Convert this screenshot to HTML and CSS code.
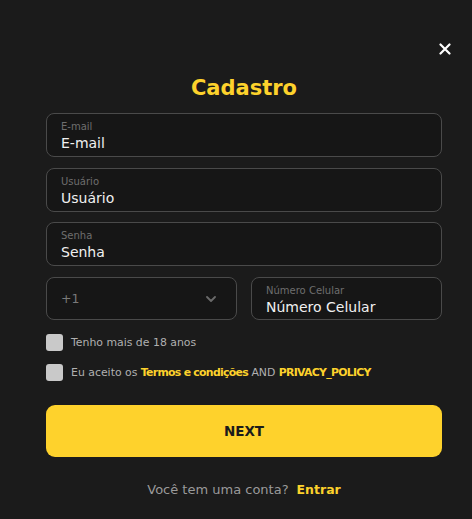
FILE: index.html
```html
<!DOCTYPE html>
<html lang="pt">
<head>
<meta charset="utf-8">
<title>Cadastro</title>
<link rel="stylesheet" href="styles.css">
</head>
<body>
<div class="modal">
  <button class="close" aria-label="Fechar">
    <svg width="12" height="12" viewBox="0 0 12 12"><path d="M1.5 1.5L10.5 10.5M10.5 1.5L1.5 10.5" stroke="#fff" stroke-width="2.2" stroke-linecap="round"/></svg>
  </button>
  <h1 class="title">Cadastro</h1>
  <div class="fields">
    <div class="field"><span class="label">E-mail</span><span class="value">E-mail</span></div>
    <div class="field"><span class="label">Usuário</span><span class="value">Usuário</span></div>
    <div class="field"><span class="label">Senha</span><span class="value">Senha</span></div>
    <div class="row">
      <div class="field select"><span class="code">+1</span>
        <svg class="chev" width="10" height="6" viewBox="0 0 10 6"><path d="M1 1L5 5L9 1" stroke="#6a6a6a" stroke-width="1.8" fill="none" stroke-linecap="round" stroke-linejoin="round"/></svg>
      </div>
      <div class="field"><span class="label">Número Celular</span><span class="value">Número Celular</span></div>
    </div>
  </div>
  <div class="checks">
    <label class="check"><span class="box"></span><span>Tenho mais de 18 anos</span></label>
    <label class="check"><span class="box"></span><span>Eu aceito os <b class="hl">Termos e condições</b> AND <b class="hl">PRIVACY_POLICY</b></span></label>
  </div>
  <button class="next">NEXT</button>
  <p class="footer"><span>Você tem uma conta?</span><b class="hl entrar">Entrar</b></p>
</div>
</body>
</html>
```
FILE: styles.css
```css
* { box-sizing: border-box; }
html, body { margin: 0; padding: 0; background: #1b1b1b; }
body { font-family: "DejaVu Sans", "Open Sans", sans-serif; color: #e6e6e6; }
.modal { position: relative; width: 472px; height: 519px; padding: 76px 30px 0 46px; }
.close { position: absolute; top: 43px; left: 439px; width: 12px; height: 12px; padding: 0; border: 0; background: none; display: block; }
.close svg { display: block; }
.title { margin: 0 0 13px; width: 396px; text-align: center; color: #fdd22c; font-size: 21px; line-height: 24px; font-weight: 700; }
.fields { display: flex; flex-direction: column; gap: 10.7px; width: 396px; }
.field { height: 44px; border: 1px solid #4a4a4a; border-radius: 8px; background: #161616; padding: 6px 14px 3px; display: flex; flex-direction: column; }
.label { font-size: 10px; line-height: 13px; color: #6e6e6e; }
.value { font-size: 14px; line-height: 20px; color: #f0f0f0; }
.row { display: grid; grid-template-columns: 1fr 1fr; gap: 14px; height: 43px; }
.row .field { height: 43px; min-width: 0; }
.select { flex-direction: row; align-items: center; justify-content: space-between; padding: 0 20px 0 14px; }
.code { font-size: 12.5px; color: #7a7a7a; }
.chev { display: block; }
.checks { display: flex; flex-direction: column; gap: 13px; margin-top: 14px; }
.check { display: flex; align-items: center; gap: 8px; font-size: 10.9px; color: #b0b0b0; white-space: nowrap; }
.box { width: 17px; height: 17px; border-radius: 3px; background: #c9c9c9; flex: none; }
.hl { color: #fdd22c; font-weight: 700; }
.check .hl { letter-spacing: -0.72px; }
.next { display: block; margin-top: 24px; width: 396px; height: 52px; border: 0; border-radius: 9px; background: #fed22c; color: #1b1b1b; font-family: inherit; font-size: 13.5px; font-weight: 700; }
.footer { margin: 25px 0 0; width: 396px; display: flex; justify-content: center; gap: 8px; font-size: 13px; color: #9a9a9a; }
.entrar { font-size: 12.5px; }
```
